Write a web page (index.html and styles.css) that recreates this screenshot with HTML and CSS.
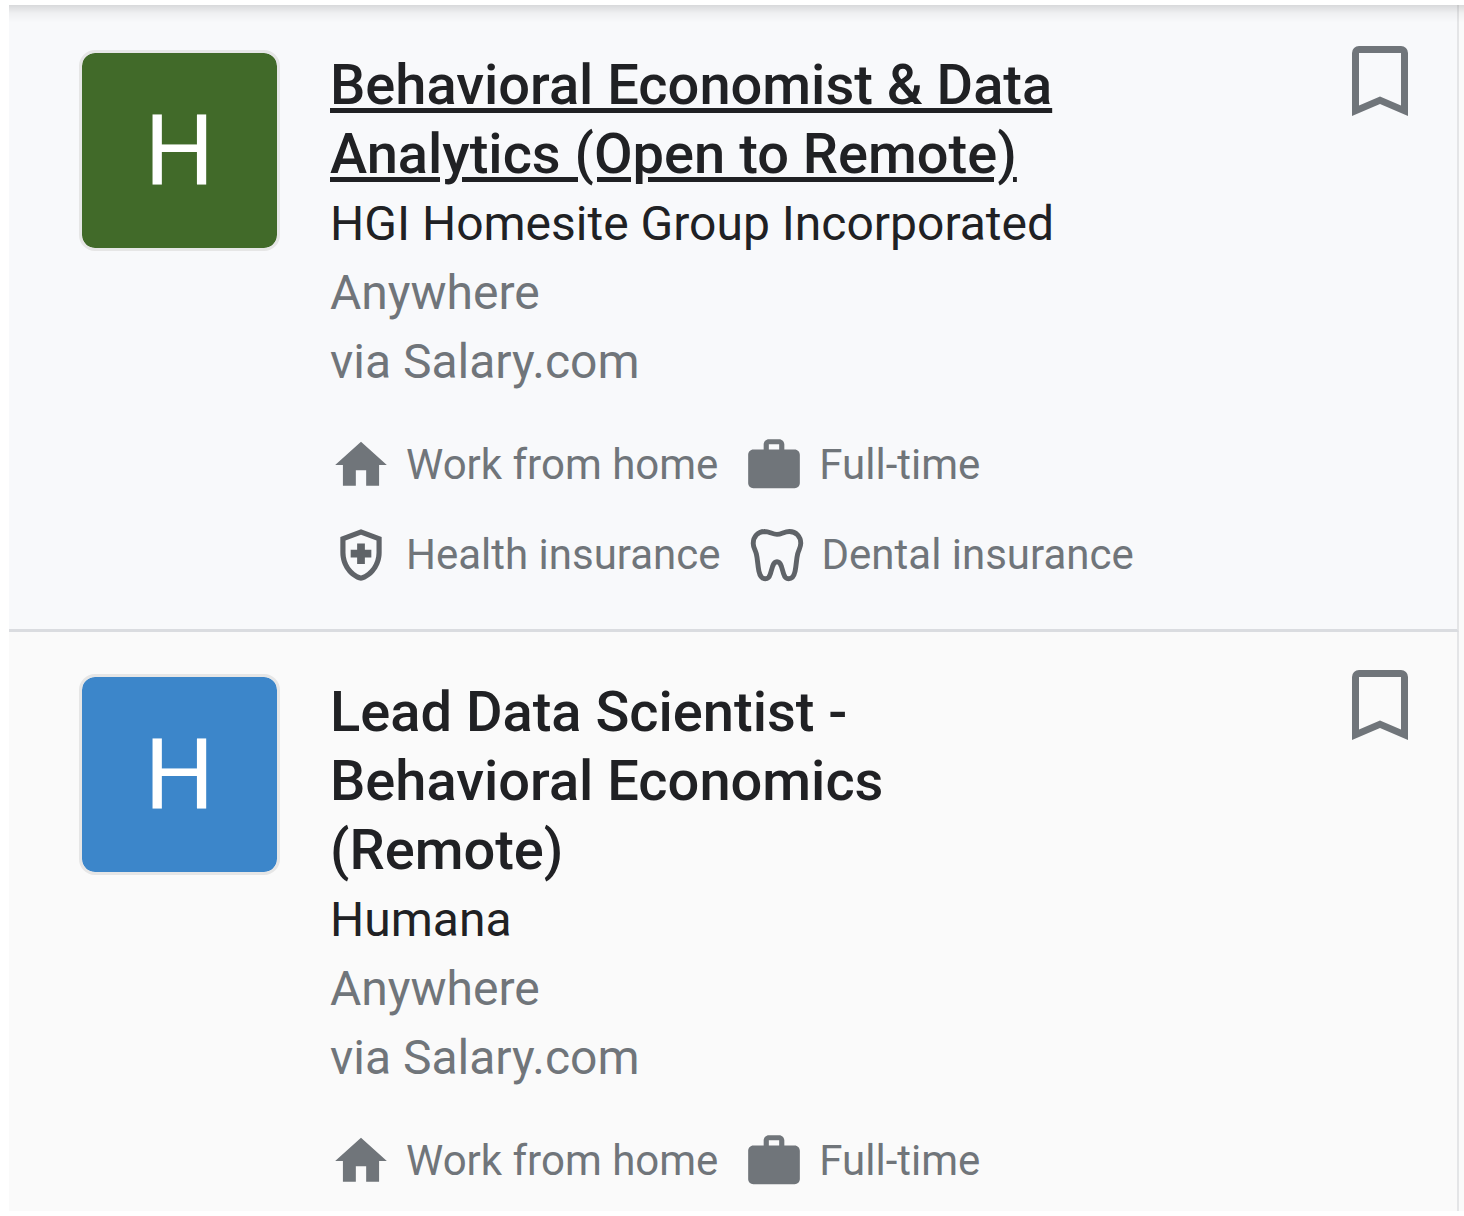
FILE: index.html
```
<!DOCTYPE html>
<html lang="en">

<head>
    <meta charset="UTF-8">
    <meta name="viewport" content="width=device-width, initial-scale=1.0">
    <title>Jobs</title>
    <link rel="stylesheet" href="styles.css">
</head>

<body>
    <!-- icons shared by the cards -->
    <svg class="sprite" aria-hidden="true">
        <symbol id="icon-home" viewBox="0 0 24 24">
            <path d="M10 20v-6h4v6h5v-8h3L12 3 2 12h3v8z" />
        </symbol>
        <symbol id="icon-work" viewBox="0 0 24 24">
            <path fill-rule="evenodd"
                d="M20 6h-4V4c0-1.100-.9-2-2-2h-4C8.900 2 8 2.900 8 4v2H4c-1.100 0-2 .9-2 2v11c0 1.100.9 2 2 2h16c1.100 0 2-.9 2-2V8c0-1.100-.9-2-2-2zM10 4h4v2h-4z" />
        </symbol>
        <symbol id="icon-health" viewBox="0 0 24 24">
            <path
                d="M10.500 13H8v-3h2.500V7.500h3V10H16v3h-2.500v2.500h-3V13zM12 2 4 5v6.090c0 5.050 3.410 9.760 8 10.910 4.590-1.150 8-5.860 8-10.910V5l-8-3zm6 9.090c0 4-2.550 7.700-6 8.830-3.450-1.130-6-4.820-6-8.830v-4.700l6-2.250 6 2.250v4.700z" />
        </symbol>
        <symbol id="icon-tooth" viewBox="0 0 24 24">
            <path fill="none" stroke="currentColor" stroke-width="1.9" stroke-linejoin="round"
                d="M7.200 2.900C4.600 2.900 2.800 4.900 2.800 7.500c0 1.500.8 2.500 1.200 4.100.5 2 .5 4.200 1 6.700.4 1.900 1.100 2.900 2.500 2.900 1.200 0 1.600-.8 1.900-1.800l.9-3c.4-1.200.9-1.800 1.700-1.800s1.300.6 1.700 1.800l.9 3c.3 1 .7 1.800 1.900 1.800 1.400 0 2.100-1 2.500-2.900.5-2.500.5-4.700 1-6.700.4-1.600 1.200-2.600 1.200-4.100 0-2.600-1.800-4.600-4.400-4.600-2 0-3 1.100-4.800 1.100s-2.800-1.100-4.900-1.100z" />
        </symbol>
        <symbol id="icon-bookmark" viewBox="0 0 56 70">
            <path fill-rule="evenodd"
                d="M7 0h42a7 7 0 0 1 7 7v63L28 58 0 70V7a7 7 0 0 1 7-7zM7 7v52.500L28 50.500 49 59.500V7z" />
        </symbol>
    </svg>

    <main class="job-list">
        <article class="job selected">
            <div class="avatar green">H</div>
            <div class="job-info">
                <h2 class="job-title"><a href="#">Behavioral Economist &amp; Data Analytics (Open to Remote)</a></h2>
                <div class="company">HGI Homesite Group Incorporated</div>
                <div class="meta">Anywhere</div>
                <div class="meta">via Salary.com</div>
                <ul class="tags">
                    <li><svg class="icon"><use href="#icon-home" /></svg>Work from home</li>
                    <li><svg class="icon"><use href="#icon-work" /></svg>Full-time</li>
                    <li><svg class="icon dark"><use href="#icon-health" /></svg>Health insurance</li>
                    <li><svg class="icon dark"><use href="#icon-tooth" /></svg>Dental insurance</li>
                </ul>
            </div>
            <button class="save" type="button" aria-label="Save job"><svg><use href="#icon-bookmark" /></svg></button>
        </article>

        <article class="job">
            <div class="avatar blue">H</div>
            <div class="job-info">
                <h2 class="job-title"><a href="#">Lead Data Scientist - Behavioral Economics (Remote)</a></h2>
                <div class="company">Humana</div>
                <div class="meta">Anywhere</div>
                <div class="meta">via Salary.com</div>
                <ul class="tags">
                    <li><svg class="icon"><use href="#icon-home" /></svg>Work from home</li>
                    <li><svg class="icon"><use href="#icon-work" /></svg>Full-time</li>
                </ul>
            </div>
            <button class="save" type="button" aria-label="Save job"><svg><use href="#icon-bookmark" /></svg></button>
        </article>
    </main>
</body>

</html>
```

FILE: styles.css
```
:root {
    --text-color: #202124;
    --muted-color: #70757a;
    --icon-dark: #5f6368;
    --border-color: #dadce0;
    --page-color: #fafafa;
    --selected-color: #f8f9fb;
}

* {
    margin: 0;
    padding: 0;
    box-sizing: border-box;
}

body {
    height: 100vh;
    padding: 5px 0 5px 9px;
    background: white;
    color: var(--text-color);
    font-family: Roboto, Arial, sans-serif;
}

.sprite {
    display: none;
}

.job-list {
    position: relative;
    height: 100%;
    overflow: hidden;
    padding-right: 5px;
    background: var(--page-color);
}

/* shadow of the bar above the list */
.job-list::before {
    content: "";
    position: absolute;
    top: 0;
    left: 0;
    right: 0;
    height: 18px;
    background: linear-gradient(rgba(0, 0, 0, 0.13), rgba(0, 0, 0, 0.04) 45%, rgba(0, 0, 0, 0));
}

.job {
    display: flex;
    align-items: flex-start;
    padding: 42px 49px 44px 70px;
    border-right: 2px solid #e4e5e7;
}

.job.selected {
    padding-top: 45px;
    padding-bottom: 43px;
    background: var(--selected-color);
    border-bottom: 3px solid var(--border-color);
}

.avatar {
    display: flex;
    align-items: center;
    justify-content: center;
    flex-shrink: 0;
    width: 201px;
    height: 201px;
    border: 3px solid #e6e6e6;
    border-radius: 16px;
    color: white;
    font-size: 98px;
}

.green {
    background: #416a29;
    background-clip: padding-box;
}

.blue {
    background: #3c86ca;
    background-clip: padding-box;
}

.job-info {
    flex: 1;
    margin-left: 50px;
    padding-top: 4px;
    font-size: 48px;
    line-height: 69px;
}

.selected .job-info {
    padding-top: 1px;
}

.job-title {
    max-width: 760px;
    font-size: 56px;
    font-weight: 500;
}

.job-title a {
    color: inherit;
    text-decoration: none;
}

.selected .job-title a {
    text-decoration: underline;
    text-decoration-thickness: 5px;
    text-underline-offset: 4px;
}

.meta {
    color: var(--muted-color);
}

.tags {
    display: flex;
    flex-wrap: wrap;
    gap: 28px 25px;
    max-width: 920px;
    margin-top: 38px;
    list-style: none;
    color: var(--muted-color);
    font-size: 42px;
    line-height: 62px;
}

.tags li {
    display: flex;
    align-items: center;
    gap: 14px;
}

.icon {
    width: 62px;
    height: 62px;
    fill: currentColor;
}

.icon.dark {
    color: var(--icon-dark);
}

.save {
    flex-shrink: 0;
    width: 56px;
    height: 70px;
    margin-top: -4px;
    background: none;
    border: none;
    cursor: pointer;
}

.save svg {
    display: block;
    width: 100%;
    height: 100%;
    fill: var(--muted-color);
}
```
